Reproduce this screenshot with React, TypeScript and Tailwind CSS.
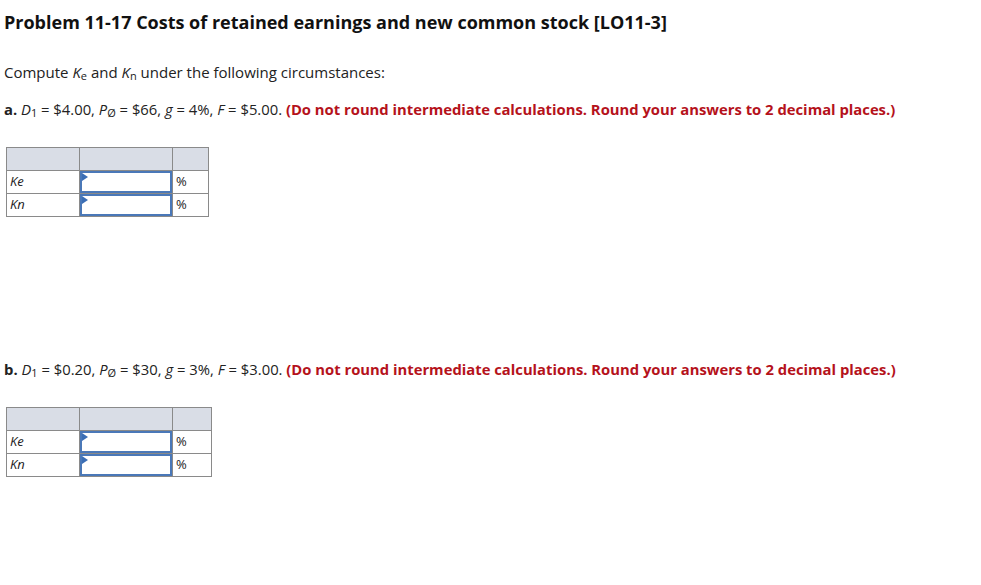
import React from "react";

function Sub(props: { children: React.ReactNode }) {
  return <sub className="text-[11px] relative top-[2px]">{props.children}</sub>;
}

function AnswerTable(props: { right: string }) {
  const rows = ["Ke", "Kn"];
  return (
    <table className={`border-collapse text-[13px] ${props.right}`}>
      <tbody>
        <tr className="h-[23px] bg-[#d9dde6]">
          <td className="border border-[#8a8a8a] w-[73px]"></td>
          <td className="border border-[#8a8a8a] w-[93px]"></td>
          <td className="border border-[#8a8a8a]"></td>
        </tr>
        {rows.map((r) => (
          <tr key={r} className="h-[23px]">
            <td className="border border-[#8a8a8a] pl-[3px] italic text-[#222]">{r}</td>
            <td className="border border-[#8a8a8a] p-0">
              <div className="relative h-[22px] border-2 border-[#4a78b8] bg-white">
                <div className="absolute left-0 top-0 w-0 h-0 border-t-[4px] border-b-[4px] border-l-[6px] border-t-transparent border-b-transparent border-l-[#3b6eb5]"></div>
              </div>
            </td>
            <td className="border border-[#8a8a8a] pl-[3px] text-[#222]">%</td>
          </tr>
        ))}
      </tbody>
    </table>
  );
}

function Given(props: { label: string; d: string; p: string; g: string; f: string }) {
  return (
    <p className="text-[14.8px] text-[#222]">
      <span className="font-bold">{props.label}.</span> <i>D</i>
      <Sub>1</Sub> = {props.d}, <i>P</i>
      <Sub>Ø</Sub> = {props.p}, <i>g</i> = {props.g}, <i>F</i> = {props.f}.{" "}
      <span className="font-bold text-[#b5121b]">
        (Do not round intermediate calculations. Round your answers to 2 decimal places.)
      </span>
    </p>
  );
}

export default function App() {
  return (
    <div className="w-[981px] h-[585px] bg-white pl-[4px] pt-[10px] font-['Open_Sans',sans-serif] text-[#222]">
      <h1 className="text-[18px] font-bold leading-[24px] text-[#111]">
        Problem 11-17 Costs of retained earnings and new common stock [LO11-3]
      </h1>
      <p className="text-[15px] mt-[28px] leading-[20px]">
        Compute <i>K</i>
        <Sub>e</Sub> and <i>K</i>
        <Sub>n</Sub> under the following circumstances:
      </p>
      <div className="mt-[17px] leading-[20px]">
        <Given label="a" d="$4.00" p="$66" g="4%" f="$5.00" />
      </div>
      <div className="mt-[28px] ml-[2px]">
        <AnswerTable right="w-[203px]" />
      </div>
      <div className="mt-[142px] leading-[20px]">
        <Given label="b" d="$0.20" p="$30" g="3%" f="$3.00" />
      </div>
      <div className="mt-[28px] ml-[2px]">
        <AnswerTable right="w-[206px]" />
      </div>
    </div>
  );
}
